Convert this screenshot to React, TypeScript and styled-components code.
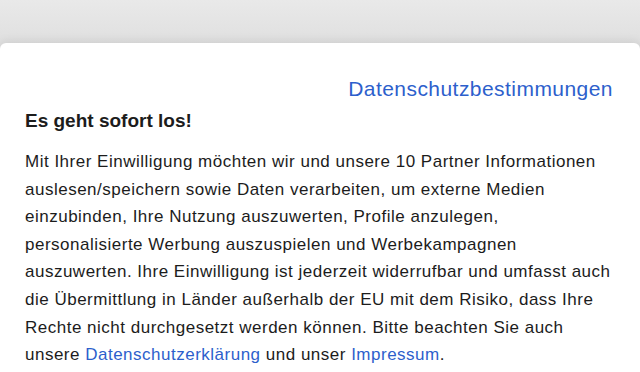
import React from 'react';
import styled, { createGlobalStyle } from 'styled-components';

const GlobalStyle = createGlobalStyle`
  html, body {
    margin: 0;
    padding: 0;
    height: 100%;
  }
  body {
    background: linear-gradient(#e9e9e9, #dcdcdc 60px);
    font-family: "Liberation Sans", Arial, sans-serif;
    overflow: hidden;
  }
`;

const Page = styled.div`
  width: 640px;
  height: 372px;
  padding-top: 43px;
  box-sizing: border-box;
`;

const Dialog = styled.section`
  background: #fff;
  border-radius: 6px 6px 0 0;
  box-shadow: 0 -2px 10px rgba(0, 0, 0, 0.08);
  height: 100%;
  padding: 0 27px 0 25px;
  box-sizing: border-box;
  color: #1c1c1c;
`;

const TopBar = styled.div`
  display: flex;
  justify-content: flex-end;
  padding-top: 33px;
  height: 26px;
  align-items: center;
`;

const Link = styled.a`
  color: #2d5fcc;
  text-decoration: none;
`;

const PolicyLink = styled(Link)`
  font-size: 21px;
  letter-spacing: 0.45px;
`;

const Title = styled.h2`
  margin: 7px 0 0;
  font-size: 19px;
  line-height: 24px;
  font-weight: 700;
  letter-spacing: 0;
`;

const Body = styled.p`
  margin: 15px 0 0;
  font-size: 17px;
  letter-spacing: 0.5px;
  line-height: 27.6px;
`;

const Line = styled.span`
  display: block;
  white-space: nowrap;
`;

export default function App() {
  return (
    <Page>
      <GlobalStyle />
      <Dialog>
        <TopBar>
          <PolicyLink href="#">Datenschutzbestimmungen</PolicyLink>
        </TopBar>
        <Title>Es geht sofort los!</Title>
        <Body>
          <Line>Mit Ihrer Einwilligung möchten wir und unsere 10 Partner Informationen</Line>
          <Line>auslesen/speichern sowie Daten verarbeiten, um externe Medien</Line>
          <Line>einzubinden, Ihre Nutzung auszuwerten, Profile anzulegen,</Line>
          <Line>personalisierte Werbung auszuspielen und Werbekampagnen</Line>
          <Line>auszuwerten. Ihre Einwilligung ist jederzeit widerrufbar und umfasst auch</Line>
          <Line>die Übermittlung in Länder außerhalb der EU mit dem Risiko, dass Ihre</Line>
          <Line>Rechte nicht durchgesetzt werden können. Bitte beachten Sie auch</Line>
          <Line>
            unsere <Link href="#">Datenschutzerklärung</Link> und unser <Link href="#">Impressum</Link>.
          </Line>
        </Body>
      </Dialog>
    </Page>
  );
}
